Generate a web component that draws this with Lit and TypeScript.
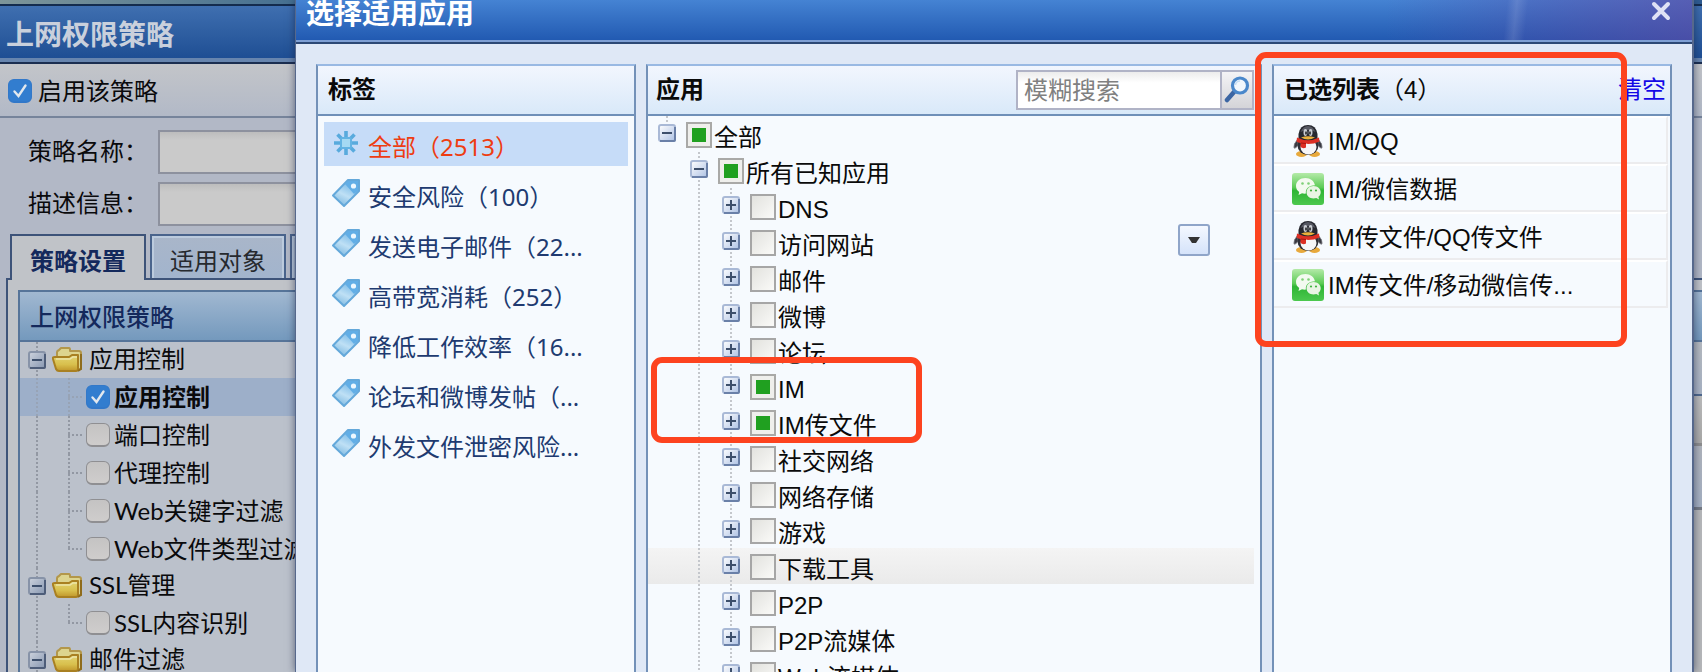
import { LitElement, html, css, svg, nothing } from "lit";
import { customElement, property, state } from "lit/decorators.js";
import { classMap } from "lit/directives/class-map.js";

const toggleIcon = (open: boolean, dim = false) => svg`
  <svg class="toggle" width="18" height="18" viewBox="0 0 18 18" aria-hidden="true">
    <defs>
      <linearGradient id="tg" x1="0" y1="0" x2="1" y2="1">
        <stop offset="0" stop-color=${dim ? "#cdd3dd" : "#ffffff"} />
        <stop offset="1" stop-color=${dim ? "#8797b1" : "#aec2e4"} />
      </linearGradient>
    </defs>
    <rect x="1" y="1" width="16" height="16" rx="2" fill="url(#tg)" stroke=${dim ? "#8793a8" : "#a9b9d6"} stroke-width="2" />
    <path d="M2 17H16Q17 17 17 16V3" fill="none" stroke=${dim ? "#4d5d79" : "#6a80a8"} stroke-width="2" />
    <path d="M4 9H14" stroke="#3d4f6b" stroke-width="2" />
    ${open ? nothing : svg`<path d="M9 4V14" stroke="#3d4f6b" stroke-width="2" />`}
  </svg>`;

const folderIcon = svg`
  <svg class="folder" width="32" height="26" viewBox="0 0 32 26" aria-hidden="true">
    <defs>
      <linearGradient id="fd" x1="0" y1="0" x2="0" y2="1">
        <stop offset="0" stop-color="#e3d673" />
        <stop offset="0.600" stop-color="#d8bf4c" />
        <stop offset="1" stop-color="#c0962a" />
      </linearGradient>
    </defs>
    <path d="M5 10V5Q5 4 7 3L9 1H17Q18 1 18 3V4H27Q29 4 29 6V22H7Z" fill="#ddd48e" stroke="#b3974a" stroke-width="2" stroke-linejoin="round" />
    <path d="M1 12Q0 10 3 10H17L20 8H26V22Q26 24 24 24H7Q5 24 4 22Z" fill="url(#fd)" stroke="#a98021" stroke-width="2" stroke-linejoin="round" />
    <path d="M4 12H18L21 10H25" fill="none" stroke="#ece4a8" stroke-width="1.5" />
    <path d="M29 7V22L26 24" fill="none" stroke="#8f6c1c" stroke-width="2" />
  </svg>`;

const allIcon = svg`
  <svg width="28" height="28" viewBox="0 0 28 28" aria-hidden="true">
    <g stroke="#58aadd" stroke-width="3.6">
      <path d="M14 2V26M2 14H26M5.500 5.500L22.500 22.500M22.500 5.500L5.500 22.500" />
    </g>
    <rect x="8" y="8" width="12" height="12" rx="2" fill="#63b3e3" />
    <rect x="10" y="10" width="8" height="8" fill="#a5d9f3" />
  </svg>`;

const tagIcon = svg`
  <svg width="28" height="28" viewBox="0 0 28 28" aria-hidden="true">
    <defs>
      <linearGradient id="tag" x1="0.800" y1="0" x2="0.300" y2="1">
        <stop offset="0" stop-color="#5fabe2" />
        <stop offset="0.300" stop-color="#8fc6ec" />
        <stop offset="0.600" stop-color="#bfe0f5" />
        <stop offset="1" stop-color="#7db8e0" />
      </linearGradient>
    </defs>
    <path d="M16 1H27V12L12 27L1 16.500Z" fill="url(#tag)" stroke="#64a8da" stroke-width="2" stroke-linejoin="round" />
    <path d="M16 2H26V12L22 15L13 5Z" fill="#62aee6" />
    <circle cx="21.500" cy="7" r="2.600" fill="#eef8ff" />
  </svg>`;

const qqIcon = svg`
  <svg width="32" height="32" viewBox="0 0 32 32" aria-hidden="true">
    <path d="M6 14Q1 19 2 23Q4 24 6 20ZM26 14Q31 19 30 23Q28 24 26 20Z" fill="#3a3a42" stroke="#7b7c84" stroke-width="0.800" />
    <ellipse cx="9.500" cy="29" rx="5.500" ry="3" fill="#e8a93c" />
    <ellipse cx="22.500" cy="29" rx="5.500" ry="3" fill="#e8a93c" />
    <ellipse cx="16" cy="20.500" rx="10.500" ry="9.500" fill="#2f2f37" />
    <ellipse cx="16.500" cy="22" rx="8" ry="7.500" fill="#f6f6f8" />
    <path d="M6.500 14V9Q8 0 16 0T25.500 9V14Q16 19 6.500 14Z" fill="#26272e" />
    <path d="M8.500 7Q11 1 16 1T23.500 7Q16 3 8.500 7Z" fill="#565862" />
    <ellipse cx="13.400" cy="7.500" rx="1.900" ry="3.400" fill="#c9ccd2" />
    <ellipse cx="18.600" cy="7.500" rx="1.900" ry="3.400" fill="#c9ccd2" />
    <ellipse cx="14" cy="8" rx="0.800" ry="1.800" fill="#111" />
    <ellipse cx="18" cy="8" rx="0.800" ry="1.800" fill="#111" />
    <path d="M9 12.500Q16 10 23 12.500Q16 16.500 9 12.500Z" fill="#eab03a" />
    <path d="M5 12.500Q16 18 27 12.500L27.500 16.500Q22 19 16 19L14 18.500V22.500Q11 24 8.500 22V18Q6 17.500 4.500 16.500Z" fill="#dc2f24" />
    <path d="M9 18L14 18.500" stroke="#a8150f" stroke-width="1" />
  </svg>`;

const wechatIcon = svg`
  <svg width="32" height="32" viewBox="0 0 32 32" aria-hidden="true">
    <defs>
      <linearGradient id="wx" x1="0" y1="0" x2="0" y2="1">
        <stop offset="0" stop-color="#b4eaa8" />
        <stop offset="0.450" stop-color="#5ccb56" />
        <stop offset="0.550" stop-color="#2fb535" />
        <stop offset="1" stop-color="#4cc84e" />
      </linearGradient>
    </defs>
    <rect width="32" height="32" rx="3" fill="url(#wx)" />
    <path d="M13.500 5C8 5 4 8.500 4 13C4 15.500 5.200 17.500 7.200 19L6.500 22L10 20.300C11 20.600 12.500 20.800 14 20.600C13 16 17 12 23 12.200C22 8 18.500 5 13.500 5Z" fill="#f3faf0" />
    <path d="M21.500 13C17.500 13 14.500 15.800 14.500 19.200C14.500 22.700 17.500 25.400 21.500 25.400C22.500 25.400 23.500 25.200 24.300 24.900L27 26.400L26.400 23.800C27.900 22.700 28.700 21 28.700 19.200C28.700 15.800 25.500 13 21.500 13Z" fill="#e9f5e4" />
    <circle cx="10.500" cy="10.500" r="1.300" fill="#7fd077" />
    <circle cx="16.500" cy="10.500" r="1.300" fill="#7fd077" />
    <circle cx="19" cy="17.500" r="1.100" fill="#41b341" />
    <circle cx="24" cy="17.500" r="1.100" fill="#41b341" />
  </svg>`;

const searchIcon = svg`
  <svg width="26" height="28" viewBox="0 0 26 28" aria-hidden="true">
    <path d="M3 24L10 16" stroke="#3c66a3" stroke-width="4.500" stroke-linecap="round" />
    <circle cx="16" cy="9.500" r="7.500" fill="#f1f7fd" stroke="#4a88cb" stroke-width="3.200" />
    <path d="M11.500 9Q12 5 16 5" fill="none" stroke="#c5def5" stroke-width="1.500" />
  </svg>`;

const closeIcon = svg`
  <svg width="20" height="20" viewBox="0 0 20 20" aria-hidden="true">
    <path d="M3 3L17 17M17 3L3 17" stroke="#dfe2f5" stroke-width="4" stroke-linecap="round" />
  </svg>`;

const base = css`
  * { box-sizing: border-box; }
  button, input { margin: 0; padding: 0; font: inherit; color: inherit; }
  button { border: 0; background: none; cursor: pointer; }
  ul { list-style: none; margin: 0; padding: 0; }
  h1, h2 { margin: 0; }
  svg { display: block; flex: none; }
`;

interface PolicyNode { label: string; folder?: boolean; checked?: boolean; last?: boolean; }

@customElement("policy-window")
export class PolicyWindow extends LitElement {
  @state() private nodes: PolicyNode[] = [
    { label: "应用控制", folder: true },
    { label: "应用控制", checked: true },
    { label: "端口控制" },
    { label: "代理控制" },
    { label: "Web关键字过滤" },
    { label: "Web文件类型过滤", last: true },
    { label: "SSL管理", folder: true },
    { label: "SSL内容识别", last: true },
    { label: "邮件过滤", folder: true },
  ];

  static styles = [base, css`
    :host {
      display: flex; flex-direction: column; height: 100%;
      font: 24px/36px Lato, "Noto Sans CJK SC", sans-serif; color: #0a0a0c; white-space: nowrap;
      background: #b2b8c6;
    }
    .strip { flex: none; height: 4px; background: linear-gradient(90deg, #7d9599, #3d6a90 20%, #2f5c92); }
    .title {
      flex: none; height: 60px; padding: 0 6px; font-size: 28px; line-height: 56px; color: #c9d0dc;
      border-top: 2px solid #142c4e; border-bottom: 2px solid #1b2e50;
      background: linear-gradient(#3f6fb0, #1f4f94 92%, #6785ae 93%, #6785ae);
    }
    .enable {
      flex: none; display: flex; align-items: center; gap: 6px; height: 54px; padding: 2px 8px 0;
      border-bottom: 2px solid #76849b; background: linear-gradient(#c3c5c9, #b2b9c7);
    }
    .form { flex: none; display: grid; grid-template-columns: 130px 1fr; row-gap: 8px; padding: 12px 28px 8px; align-items: center; }
    .form label { padding-bottom: 2px; }
    .form input { width: 100%; height: 44px; border: 2px solid #8d919e; background: linear-gradient(#bdbdbd, #cacaca 20%); }
    .tabs { flex: none; display: flex; gap: 4px; padding: 0 10px; height: 44px; }
    .tab {
      width: 136px; border: 2px solid #4a648c; border-bottom: 0; line-height: 50px; color: #26292e;
      background: linear-gradient(#a9b6c9, #a2b4cd); box-shadow: inset 2px 2px #bccbdd, inset -2px 0 #bccbdd;
    }
    .tab.on {
      height: 46px; font-weight: 700; color: #14295c; border-color: #3d5379;
      background: #c0c3c8; box-shadow: none; position: relative;
    }
    .page { flex: 1; min-height: 0; margin-left: 6px; padding: 10px 0 0 10px; border: 2px solid #3d5379; border-width: 2px 0 0 2px; background: #c0c3c8; }
    .panel { height: 100%; border: 2px solid #567499; border-width: 2px 0 0 2px; }
    .caption { height: 50px; padding: 0 10px; line-height: 50px; font-weight: 500; color: #14295c; border-bottom: 2px solid #567499; background: linear-gradient(#a1b8d1, #7499bd); }
    .split { display: flex; justify-content: space-between; background: #bbc1cb; height: 100%; }
    .tree { width: 320px; }
    .row { display: flex; align-items: center; height: 38px; padding-left: 1px; }
    .row.folder-row { height: 36px; }
    .folder-row span { padding-bottom: 2px; }
    .row.checked { background: #9dafc9; font-weight: 700; }
    .row.checked .cell { opacity: 0.500; }
    .cell { width: 32px; align-self: stretch; display: grid; place-items: center; background: repeating-linear-gradient(#9298a3 0 2px, transparent 2px 4px) 15px 0 / 2px 100% no-repeat; }
    .branch {
      background: repeating-linear-gradient(#9298a3 0 2px, transparent 2px 4px) 15px 0 / 2px 100% no-repeat,
        repeating-linear-gradient(90deg, #9298a3 0 2px, transparent 2px 4px) 15px 18px / 14px 2px no-repeat;
    }
    .branch.last { background-size: 2px 18px, 14px 2px; }
    .folder { margin-left: -1px; margin-right: 5px; }
    .row label { padding-left: 4px; }
    .tick { appearance: none; flex: none; width: 24px; height: 24px; margin-left: 1px; border: 1px solid #8f8f92; border-bottom-width: 2px; border-radius: 6px; background: linear-gradient(#c4c3c3, #cfcdcc); }
    .enable .tick { margin-left: 0; }
    .tick:checked {
      border-color: #3278c9;
      background: #327dcf url("data:image/svg+xml,%3Csvg xmlns='http://www.w3.org/2000/svg' viewBox='0 0 20 20'%3E%3Cpath d='M4.500 10.500L8.500 15L15.500 4.500' fill='none' stroke='%23e2e8ee' stroke-width='2.400' stroke-linecap='round'/%3E%3C/svg%3E") center / 20px no-repeat;
    }
    .detail { width: 12px; }
    .a { height: 54px; background: linear-gradient(#b6bac0, #a9b3c4); border-bottom: 2px solid #4f688d; }
    .b { height: 50px; background: linear-gradient(#bcbcbc, #abaaa8); border-bottom: 3px solid #8e8e8e; }
    .c { height: 64px; background: linear-gradient(#b0b4bc, #a5b0c2); border-bottom: 3px solid #767b85; }
    .d { height: 100%; background: #b7b8ba; }
  `];

  private toggle(node: PolicyNode) {
    node.checked = !node.checked;
    this.nodes = [...this.nodes];
  }

  render() {
    return html`
      <div class="strip"></div>
      <h1 class="title">上网权限策略</h1>
      <div class="enable">
        <input class="tick" id="enable" type="checkbox" checked />
        <label for="enable">启用该策略</label>
      </div>
      <div class="form">
        <label for="name">策略名称：</label><input id="name" type="text" />
        <label for="desc">描述信息：</label><input id="desc" type="text" />
      </div>
      <div class="tabs">
        <button class="tab on">策略设置</button>
        <button class="tab">适用对象</button>
        <button class="tab" aria-label="更多"></button>
      </div>
      <div class="page">
        <div class="panel">
          <div class="caption">上网权限策略</div>
          <div class="split">
            <div class="tree">
              ${this.nodes.map((n, i) => n.folder
                ? html`<div class="row folder-row">
                    <button class="cell" aria-label="折叠">${toggleIcon(true, true)}</button>
                    ${folderIcon}<span>${n.label}</span>
                  </div>`
                : html`<div class=${classMap({ row: true, checked: !!n.checked })}>
                    <span class="cell"></span>
                    <span class=${classMap({ cell: true, branch: true, last: !!n.last })}></span>
                    <input class="tick" type="checkbox" id="p${i}" .checked=${!!n.checked} @change=${() => this.toggle(n)} />
                    <label for="p${i}">${n.label}</label>
                  </div>`)}
            </div>
            <div class="detail">
              <div class="a"></div><div class="b"></div><div class="c"></div><div class="d"></div>
            </div>
          </div>
        </div>
      </div>`;
  }
}

interface AppNode { label: string; depth: number; open?: boolean; partial?: boolean; hover?: boolean; }

const apps: AppNode[] = [
  { label: "全部", depth: 0, open: true, partial: true },
  { label: "所有已知应用", depth: 1, open: true, partial: true },
  { label: "DNS", depth: 2 },
  { label: "访问网站", depth: 2 },
  { label: "邮件", depth: 2 },
  { label: "微博", depth: 2 },
  { label: "论坛", depth: 2 },
  { label: "IM", depth: 2, partial: true },
  { label: "IM传文件", depth: 2, partial: true },
  { label: "社交网络", depth: 2 },
  { label: "网络存储", depth: 2 },
  { label: "游戏", depth: 2 },
  { label: "下载工具", depth: 2, hover: true },
  { label: "P2P", depth: 2 },
  { label: "P2P流媒体", depth: 2 },
  { label: "Web流媒体", depth: 2 },
];

const tags = [
  "全部（2513）", "安全风险（100）", "发送电子邮件（22...", "高带宽消耗（252）",
  "降低工作效率（16...", "论坛和微博发帖（...", "外发文件泄密风险...",
];

const selected = [
  { icon: qqIcon, label: "IM/QQ" },
  { icon: wechatIcon, label: "IM/微信数据" },
  { icon: qqIcon, label: "IM传文件/QQ传文件" },
  { icon: wechatIcon, label: "IM传文件/移动微信传..." },
];

@customElement("app-picker")
export class AppPicker extends LitElement {
  @property({ type: Number }) active = 0;

  static styles = [base, css`
    :host {
      display: flex; flex-direction: column;
      font: 24px/36px "Liberation Sans", "Noto Sans CJK SC", sans-serif; color: #0a0a0a; white-space: nowrap;
      background: #dfe8f6; border: 1px solid #56688c; border-width: 0 2px 0 1px;
      box-shadow: 0 0 8px rgba(20, 30, 60, 0.600);
    }
    .title {
      flex: none; display: flex; justify-content: space-between; align-items: flex-start; height: 44px; padding: 0 21px 0 10px;
      color: #fff; border-bottom: 2px solid #2c4875;
      background:
        linear-gradient(transparent 40px, #7e9fd4 40px),
        linear-gradient(96deg, transparent 86.500%, rgba(255, 255, 255, 0.120) 87.200%, transparent 88%),
        linear-gradient(90deg, transparent 78%, rgba(92, 68, 160, 0.350) 90%, rgba(98, 70, 160, 0.600)),
        linear-gradient(#4583d3, #2058b0);
    }
    h1 { font-size: 28px; line-height: 30px; }
    .close { margin-top: 1px; }
    .body { flex: 1; min-height: 0; display: grid; grid-template-columns: 320fr 616fr 400fr; gap: 10px; padding: 20px 20px 0; }
    .panel { min-width: 0; min-height: 0; overflow: hidden; border: 2px solid #7391b8; border-top-color: #99b9e3; border-bottom: 0; background: #f6fafe; }
    .head {
      display: flex; align-items: center; justify-content: space-between; height: 50px; padding: 0 4px 0 10px;
      border-bottom: 2px solid #6f90b8; background: linear-gradient(#f2f6fe, #d9e9f9);
    }
    h2 { font-size: 24px; line-height: 36px; }
    h2 span { font-weight: 400; }
    .apps .head { padding: 0 6px 0 8px; }
    .clear { color: #1408e6; text-decoration: none; }
    .tags { padding: 6px; font-family: "Noto Sans", "Noto Sans CJK SC", sans-serif; color: #203a70; }
    .tags li { margin-bottom: 6px; }
    .tag { display: flex; align-items: center; gap: 8px; width: 100%; height: 44px; padding: 0 8px; line-height: 36px; }
    .tag svg { margin-bottom: 2px; }
    .tag span { padding-top: 5px; }
    .tag.on { background: #c6dcf8; color: #ee3d12; }
    .search { display: flex; width: 238px; height: 40px; border: 2px solid #b0b3c6; background: #fff; }
    .search input { flex: 1; min-width: 0; padding: 2px 6px 0; border: 0; outline: 0; background: linear-gradient(#ececec, #fff 30%); }
    .search input::placeholder { color: #808080; opacity: 1; }
    .search button { width: 32px; display: grid; place-items: center; border-left: 2px solid #b0b3c6; background: linear-gradient(#f4f4f6, #d4d4d8); }
    .row { display: flex; height: 36px; padding-left: 3px; margin-right: 6px; }
    .row.hover { background: linear-gradient(#f4f4f4, #eaeaea); }
    .cell { width: 32px; display: grid; align-content: start; justify-content: center; padding-top: 8px; }
    .line { background: repeating-linear-gradient(#c4c7cc 0 2px, transparent 2px 4px) 15px 0 / 2px 100% no-repeat; }
    .line.root { background-size: 2px 8px; }
    .box { appearance: none; flex: none; width: 26px; height: 26px; margin: 6px 2px 0 3px; border: 2px solid #a6a6a6; background: linear-gradient(135deg, #e2e2de, #fafaf8); }
    .box:indeterminate { border-color: #a9a9a7; background: linear-gradient(#20a020, #20a020) center / 14px 14px no-repeat, #efefec; }
    .row label { line-height: 44px; flex: 1; }
    .menu { width: 32px; height: 32px; margin-right: 44px; display: grid; place-items: center; border: 2px solid #8fa5c9; border-radius: 3px; background: linear-gradient(#f4f8ff, #d5e3fa); }
    .item { display: flex; align-items: center; gap: 4px; height: 48px; margin-right: 2px; padding-left: 18px; border: 2px solid #fff; border-width: 2px 2px 0 0; border-right-color: #ececee; box-shadow: inset 0 -2px #ececee; }
    .item span { padding-top: 2px; }
  `];

  render() {
    return html`
      <header class="title">
        <h1>选择适用应用</h1>
        <button class="close" aria-label="关闭">${closeIcon}</button>
      </header>
      <div class="body">
        <section class="panel">
          <div class="head"><h2>标签</h2></div>
          <ul class="tags">
            ${tags.map((t, i) => html`<li>
              <button class=${classMap({ tag: true, on: i === this.active })} @click=${() => (this.active = i)}>
                ${i === 0 ? allIcon : tagIcon}<span>${t}</span>
              </button>
            </li>`)}
          </ul>
        </section>
        <section class="panel apps">
          <div class="head">
            <h2>应用</h2>
            <div class="search">
              <input type="text" placeholder="模糊搜索" aria-label="模糊搜索" />
              <button aria-label="搜索">${searchIcon}</button>
            </div>
          </div>
          ${apps.map((a, i) => html`<div class=${classMap({ row: true, hover: !!a.hover })}>
            ${a.depth > 0 ? html`<span class="cell"></span>` : nothing}
            ${a.depth > 1 ? html`<span class="cell line"></span>` : nothing}
            <button class=${classMap({ cell: true, line: true, root: a.depth === 0 })} aria-label="展开">${toggleIcon(!!a.open)}</button>
            <input class="box" type="checkbox" id="a${i}" .indeterminate=${!!a.partial} />
            <label for="a${i}">${a.label}</label>
            ${i === 3 ? html`<button class="menu" aria-label="更多">
              <svg width="12" height="6" viewBox="0 0 12 6"><path d="M0 0H12L8 6H4Z" fill="#333" /></svg>
            </button>` : nothing}
          </div>`)}
        </section>
        <section class="panel">
          <div class="head">
            <h2>已选列表<span>（4）</span></h2>
            <a class="clear" href="#clear">清空</a>
          </div>
          <ul>${selected.map(s => html`<li class="item">${s.icon}<span>${s.label}</span></li>`)}</ul>
        </section>
      </div>`;
  }
}

@customElement("app-root")
export class AppRoot extends LitElement {
  static styles = css`
    :host { display: block; position: relative; height: 100vh; overflow: hidden; }
    .dialog { position: absolute; inset: 0 8px 0 295px; }
    .mark { position: absolute; box-sizing: border-box; border: 6px solid #fd431f; border-radius: 11px; pointer-events: none; }
    .tree-mark { left: 651px; top: 357px; width: 271px; height: 86px; }
    .list-mark { right: 75px; top: 52px; width: 372px; height: 295px; }
  `;

  render() {
    return html`
      <policy-window></policy-window>
      <app-picker class="dialog"></app-picker>
      <div class="mark tree-mark"></div>
      <div class="mark list-mark"></div>`;
  }
}
